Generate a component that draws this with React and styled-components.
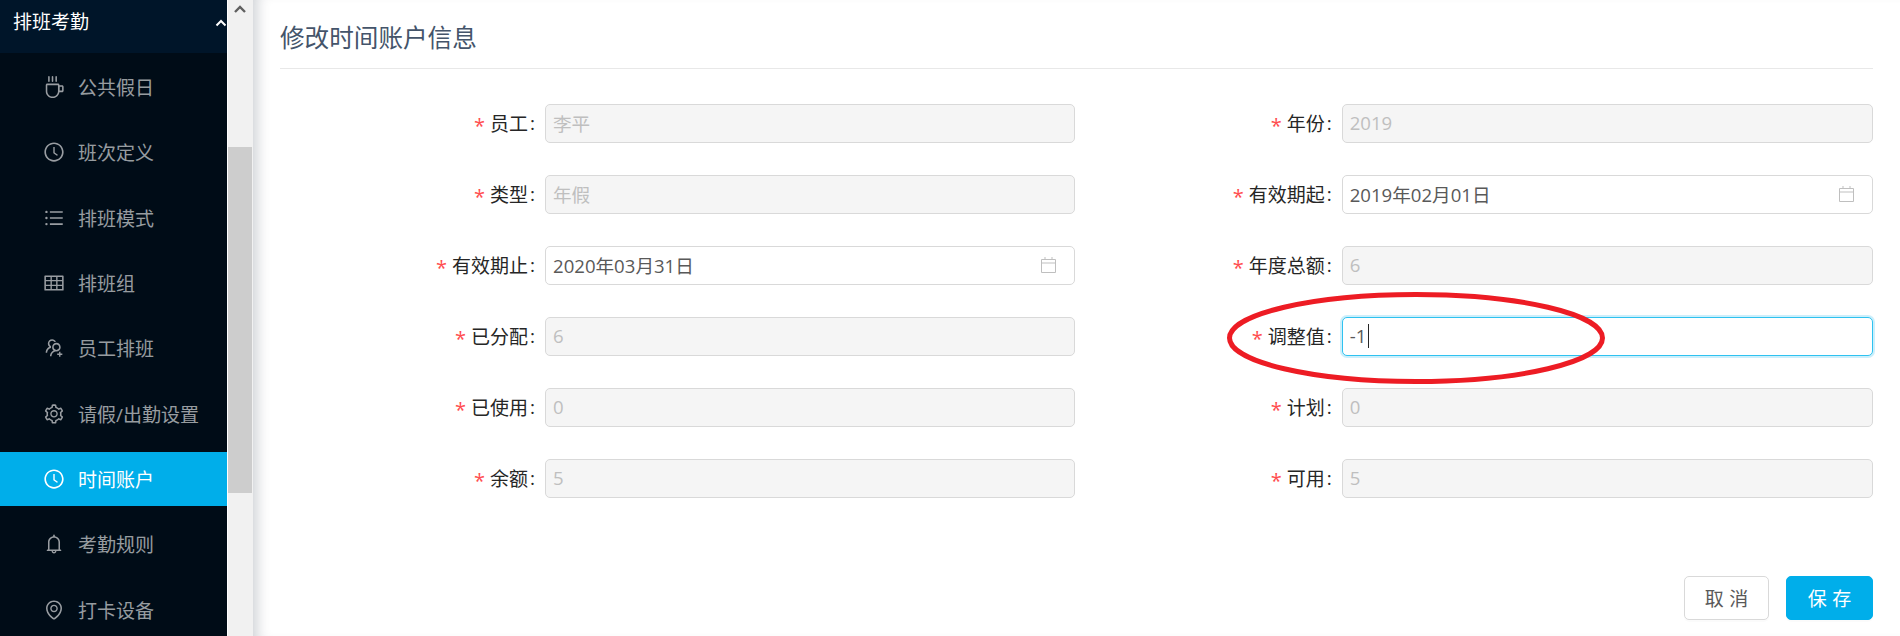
import React from 'react';
import styled, { createGlobalStyle } from 'styled-components';
import {
    AiOutlineCoffee,
    AiOutlineClockCircle,
    AiOutlineBars,
    AiOutlineTable,
    AiOutlineUsergroupAdd,
    AiOutlineSetting,
    AiOutlineBell,
    AiOutlineEnvironment,
} from 'react-icons/ai';

const menuItems = [
    { label: '公共假日', Icon: AiOutlineCoffee },
    { label: '班次定义', Icon: AiOutlineClockCircle },
    { label: '排班模式', Icon: AiOutlineBars },
    { label: '排班组', Icon: AiOutlineTable },
    { label: '员工排班', Icon: AiOutlineUsergroupAdd },
    { label: '请假/出勤设置', Icon: AiOutlineSetting },
    { label: '时间账户', Icon: AiOutlineClockCircle, active: true },
    { label: '考勤规则', Icon: AiOutlineBell },
    { label: '打卡设备', Icon: AiOutlineEnvironment },
];

const fields = [
    { label: '员工', value: '李平', disabled: true },
    { label: '年份', value: '2019', disabled: true },
    { label: '类型', value: '年假', disabled: true },
    { label: '有效期起', value: '2019年02月01日', date: true },
    { label: '有效期止', value: '2020年03月31日', date: true },
    { label: '年度总额', value: '6', disabled: true },
    { label: '已分配', value: '6', disabled: true },
    { label: '调整值', value: '-1', focused: true },
    { label: '已使用', value: '0', disabled: true },
    { label: '计划', value: '0', disabled: true },
    { label: '余额', value: '5', disabled: true },
    { label: '可用', value: '5', disabled: true },
];

const CalendarIcon = () => (
    <DateIcon viewBox="0 0 17 17">
        <path d="M1.5 3.5h14v13h-14zM1.5 7h14M5 1v3M12 1v3" />
    </DateIcon>
);

const App = () => {
    return (
        <Page>
            <GlobalStyle />
            <Sidebar>
                <MenuHeader>
                    <span>排班考勤</span>
                    <Chevron viewBox="0 0 12 8">
                        <path d="M1.5 6.5 6 2l4.5 4.5" />
                    </Chevron>
                </MenuHeader>
                <Menu>
                    {menuItems.map(({ label, Icon, active }) => (
                        <MenuItem key={label} $active={active}>
                            <Icon />
                            <span>{label}</span>
                        </MenuItem>
                    ))}
                </Menu>
            </Sidebar>
            <Scrollbar>
                <ScrollArrow viewBox="0 0 12 8">
                    <path d="M1 7 6 2l5 5" />
                </ScrollArrow>
                <ScrollThumb />
            </Scrollbar>
            <Main>
                <Title>修改时间账户信息</Title>
                <Form>
                    {fields.map(({ label, value, disabled, date, focused }) => (
                        <Field key={label}>
                            <Label>
                                <Star>*</Star>
                                {label}
                                <Colon>:</Colon>
                            </Label>
                            <InputBox $disabled={disabled} $focused={focused}>
                                {value}
                                {focused && <Caret />}
                                {date && <CalendarIcon />}
                            </InputBox>
                        </Field>
                    ))}
                </Form>
                <Actions>
                    <Button>取消</Button>
                    <Button $primary>保存</Button>
                </Actions>
                <Mark viewBox="0 0 386 98">
                    <ellipse cx="193" cy="49" rx="186.5" ry="43.5" />
                </Mark>
            </Main>
        </Page>
    );
};

const GlobalStyle = createGlobalStyle`
    html, body {
        margin: 0;
        height: 636px;
        overflow: hidden;
        background: #ffffff;
    }
    * {
        box-sizing: border-box;
    }
`;
const Page = styled.div`
    display: flex;
    height: 636px;
    overflow: hidden;
    font-family: "Open Sans", "Noto Sans CJK SC", sans-serif;
`;
const Sidebar = styled.aside`
    width: 227px;
    flex-shrink: 0;
    background: #000c17;
    overflow: hidden;
`;
const MenuHeader = styled.div`
    height: 53px;
    background: #001529;
    color: #ffffff;
    font-size: 19px;
    padding: 0 0 12px 13px;
    display: flex;
    align-items: center;
    justify-content: space-between;
`;
const Chevron = styled.svg`
    width: 12px;
    height: 8px;
    margin-top: 4px;
    fill: none;
    stroke: #ffffff;
    stroke-width: 2;
`;
const Menu = styled.nav`
    display: flex;
    flex-direction: column;
    gap: 11.33px;
    padding-top: 7px;
`;
const MenuItem = styled.div`
    flex-shrink: 0;
    height: 54px;
    padding-left: 43px;
    display: flex;
    align-items: center;
    gap: 13px;
    font-size: 19px;
    color: ${(props) => (props.$active ? '#ffffff' : 'rgba(255, 255, 255, 0.6)')};
    background: ${(props) => (props.$active ? '#00aeea' : 'transparent')};
    svg {
        font-size: 22px;
        flex-shrink: 0;
    }
`;
const Scrollbar = styled.div`
    width: 26px;
    flex-shrink: 0;
    background: #f1f1f1;
    border-left: 1px solid #ffffff;
    position: relative;
    display: flex;
    flex-direction: column;
    align-items: stretch;
`;
const ScrollArrow = styled.svg`
    width: 12px;
    height: 8px;
    margin: 5px 0 0 6px;
    fill: none;
    stroke: #606060;
    stroke-width: 2.4;
`;
const ScrollThumb = styled.div`
    height: 346px;
    margin-top: 134px;
    width: 24px;
    background: #cdcdcd;
`;
const Main = styled.main`
    flex: 1;
    min-width: 0;
    position: relative;
    padding: 0 27px;
    background: #ffffff;
    box-shadow: inset 14px 0 14px -10px rgba(0, 21, 41, 0.2);
`;
const Title = styled.h1`
    margin: 0;
    height: 69px;
    padding-top: 20px;
    font-size: 24.6px;
    line-height: 36px;
    font-weight: 400;
    color: #44546a;
    border-bottom: 1px solid #e8e8e8;
`;
const Form = styled.div`
    display: grid;
    grid-template-columns: 795px 797px;
    column-gap: 1px;
    row-gap: 32px;
    margin-top: 35px;
`;
const Field = styled.div`
    display: grid;
    grid-template-columns: 1fr 2fr;
    align-items: center;
`;
const Label = styled.label`
    display: flex;
    justify-content: flex-end;
    align-items: center;
    padding: 0 10px 2px 0;
    font-size: 19px;
    color: #262626;
`;
const Star = styled.span`
    color: #ff4d4f;
    font-size: 20px;
    margin-right: 5px;
    padding-top: 6px;
`;
const Colon = styled.span`
    margin-left: 2px;
`;
const InputBox = styled.div`
    height: 39px;
    padding: 0 7px 2px 7px;
    display: flex;
    align-items: center;
    font-size: 18.6px;
    border-radius: 5px;
    border: 1px solid ${(props) => (props.$focused ? '#2fc2f0' : '#d9d9d9')};
    color: ${(props) => (props.$disabled ? '#bfbfbf' : '#595959')};
    background: ${(props) => (props.$disabled ? '#f5f5f5' : '#ffffff')};
    box-shadow: ${(props) => (props.$focused ? '0 0 0 2px rgba(0, 174, 234, 0.2)' : 'none')};
`;
const DateIcon = styled.svg`
    width: 17px;
    height: 17px;
    margin-left: auto;
    margin-right: 10px;
    fill: none;
    stroke: #bfbfbf;
    stroke-width: 1;
`;
const Caret = styled.span`
    width: 1px;
    height: 24px;
    margin-left: 2px;
    background: #262626;
`;
const Actions = styled.div`
    display: flex;
    justify-content: flex-end;
    gap: 17px;
    margin-top: 78px;
`;
const Button = styled.button`
    width: ${(props) => (props.$primary ? '87px' : '85px')};
    height: 44px;
    padding: 0;
    font-family: inherit;
    font-size: 19px;
    letter-spacing: 5.5px;
    text-indent: 5.5px;
    border-radius: 5px;
    border: 1px solid ${(props) => (props.$primary ? '#00aeea' : '#d9d9d9')};
    color: ${(props) => (props.$primary ? '#ffffff' : '#595959')};
    background: ${(props) => (props.$primary ? '#00aeea' : '#ffffff')};
    box-shadow: 0 2px 0 rgba(0, 0, 0, 0.015);
`;
const Mark = styled.svg`
    position: absolute;
    left: 970px;
    top: 289px;
    width: 386px;
    height: 98px;
    fill: none;
    stroke: #ed1c24;
    stroke-width: 5;
`;

export default App;
